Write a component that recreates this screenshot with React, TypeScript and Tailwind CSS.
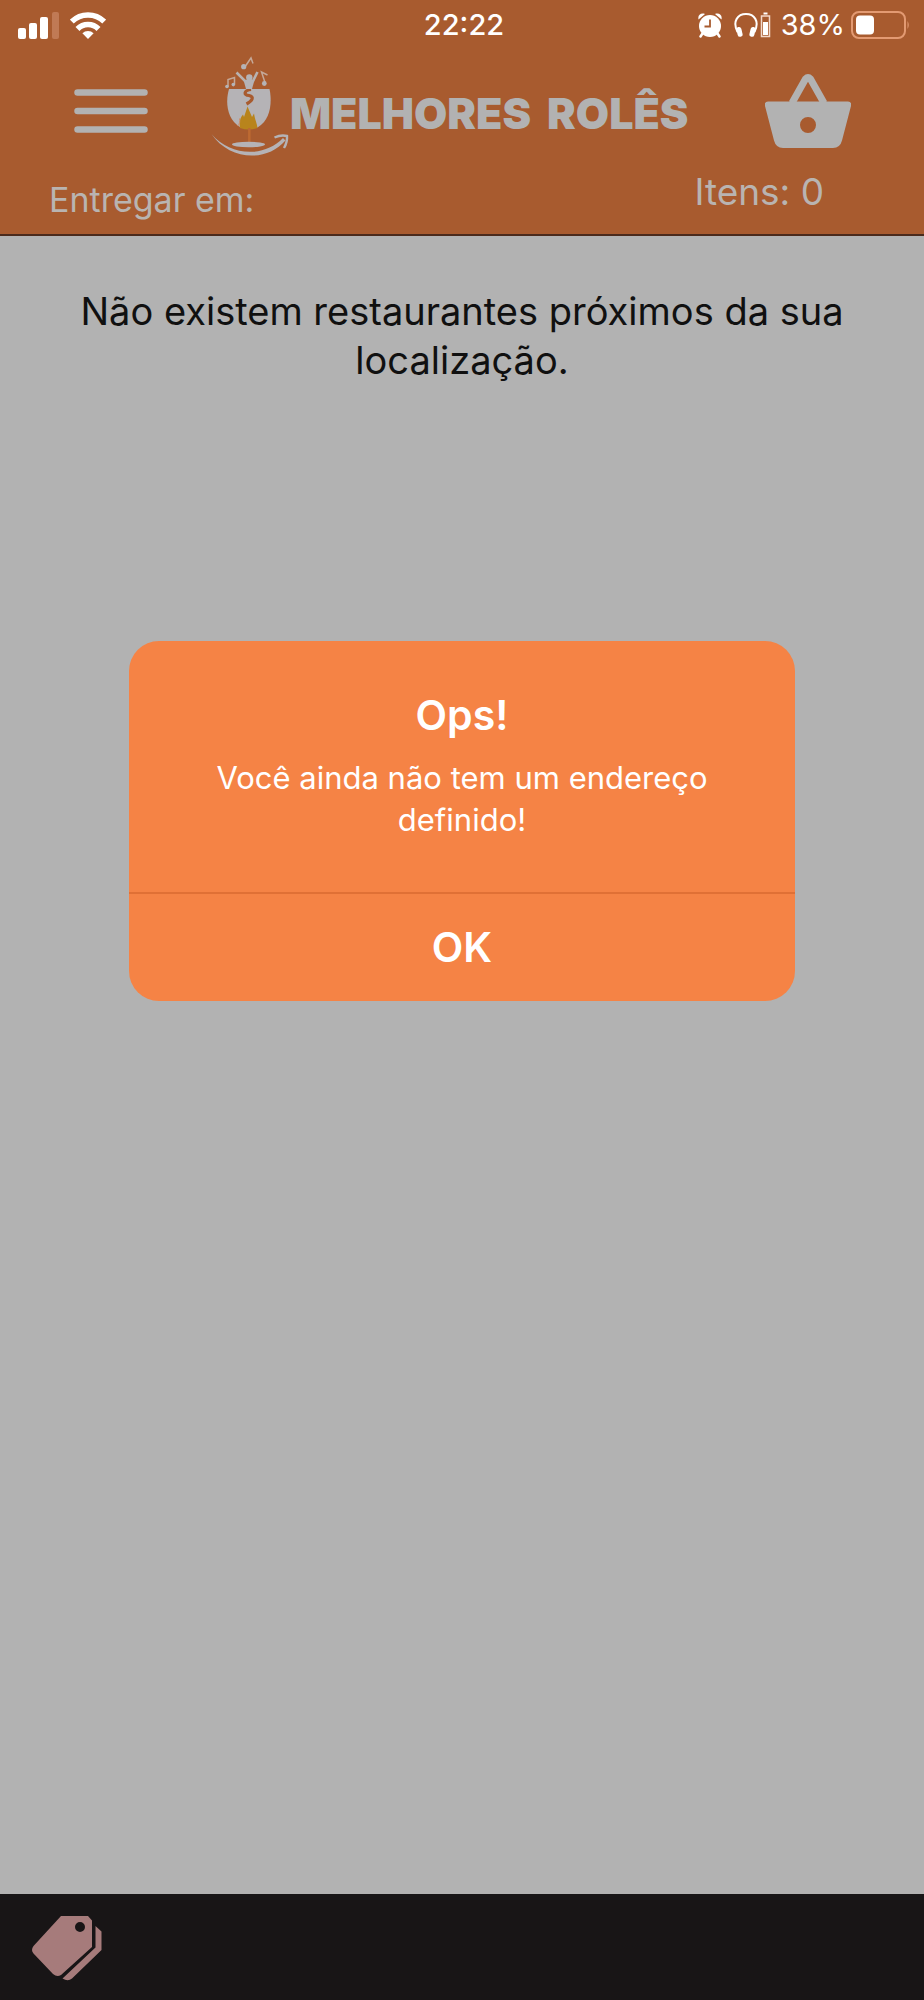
import { useState } from 'react';

function SignalIcon() {
  return (
    <svg viewBox="0 0 42 27" className="w-[42px] h-[27px]" fill="#fff">
      <rect x="0" y="16" width="8" height="11" rx="2" />
      <rect x="11" y="11" width="8" height="16" rx="2" />
      <rect x="22" y="5" width="8" height="22" rx="2" />
      <rect x="34" y="0" width="7" height="27" rx="2" fill="#c07a55" />
    </svg>
  );
}

function WifiIcon() {
  return (
    <svg viewBox="0 0 36 27" className="w-9 h-[27px]" fill="none" stroke="#fff" strokeWidth="5.500">
      <path d="M1.800 9.600 A23 23 0 0 1 34.200 9.600" />
      <path d="M7.500 17 A14.500 14.500 0 0 1 28.500 17" />
      <path d="M12.400 21.200 A8 8 0 0 1 23.600 21.200 L18 27 Z" fill="#fff" stroke="none" />
    </svg>
  );
}

function AlarmIcon() {
  return (
    <svg viewBox="0 0 24 25" className="w-6 h-[25px]" fill="#fff">
      <circle cx="12" cy="13" r="11" />
      <path d="M0.500 6.500 C-0.500 2 3 -0.500 7 1 Z M23.500 6.500 C24.500 2 21 -0.500 17 1 Z" />
      <path d="M4.500 20.500 L2.500 23.500 M19.500 20.500 L21.500 23.500" stroke="#fff" strokeWidth="2.500" strokeLinecap="round" />
      <path d="M12 6.500 V13.500 H6.500" fill="none" stroke="#a85b2f" strokeWidth="1.800" />
    </svg>
  );
}

function HeadphonesIcon() {
  return (
    <svg viewBox="0 0 37 26" className="w-[37px] h-[26px]" fill="none" stroke="#fff">
      <path d="M3.500 20 C-2 9 4 2 12 2 S26 9 20.500 20" strokeWidth="2" />
      <rect x="3" y="15" width="5" height="10" rx="2.500" fill="#fff" stroke="none" transform="rotate(-14 5 20)" />
      <rect x="16" y="15" width="5" height="10" rx="2.500" fill="#fff" stroke="none" transform="rotate(14 19 20)" />
      <path d="M27.500 4 H35.500 V24.500 H27.500 Z" stroke="#f3d9cb" strokeWidth="1.500" />
      <path d="M29.500 1.500 H33.500" strokeWidth="2" />
      <rect x="29" y="10" width="5" height="13" fill="#fff" stroke="none" />
    </svg>
  );
}

function BatteryIcon() {
  return (
    <svg viewBox="0 0 59 28" className="w-[59px] h-7">
      <rect x="1" y="1" width="53" height="26" rx="7" fill="none" stroke="#e39a72" strokeWidth="2" />
      <rect x="5" y="4.500" width="18" height="19" rx="4" fill="#fff" />
      <path d="M56.500 10 Q59 14 56.500 18 Z" fill="#e39a72" />
    </svg>
  );
}

function MenuIcon() {
  return (
    <svg viewBox="0 0 74 44" className="w-[74px] h-11" stroke="#b2b2b2" strokeWidth="6.500" strokeLinecap="round">
      <path d="M3.500 3.500 H70.500 M3.500 22 H70.500 M3.500 40.500 H70.500" />
    </svg>
  );
}

function LogoIcon() {
  return (
    <svg viewBox="210 56 80 110" className="w-20 h-[110px] shrink-0" fill="#b5b3b6">
      {/* Glass */}
      <path d="M229 89 H269.500 C272 101 271.500 119 257.500 127.500 H240.500 C226 119 225.500 101 229 89 Z" />
      <path d="M251 89.500 C244 90.500 243 95 249 95.500 C255 97 252 101 246.500 104" fill="none" stroke="#a85b2f" strokeWidth="3.200" />
      <path d="M240 128 C239 122 240 118 243 114.500 L244 117 L247.500 106.500 L252 117 L254 113.500 C255 120 257 123 257.500 128 Q249 131 240 128 Z" fill="#b8841c" />
      <path d="M237.500 126 C240 124 240 121 239.500 118.500" fill="none" stroke="#cf8b68" />
      <path d="M249.300 128 V143" stroke="#bd6a32" strokeWidth="2.500" />
      <ellipse cx="248.500" cy="144.500" rx="16.500" ry="2.700" />
      {/* Person */}
      <circle cx="249.300" cy="77.500" r="3.200" />
      <path d="M236.500 72.500 L245 81 H253 L257.500 72" fill="none" stroke="#b8b2b0" strokeWidth="2.600" />
      <path d="M243.500 80 H254.500 L252 89 H246 Z" />
      {/* Notes */}
      <g stroke="#c4a898" strokeWidth="1.500" fill="none">
        <path d="M245.500 66 L251 58 L253 63.500" />
        <path d="M228 86.500 V79.500 L234.500 77.500 V84.500" />
        <path d="M265.500 84 L261.500 72 L267.500 75" />
      </g>
      <circle cx="243.700" cy="66.700" r="2.600" />
      <circle cx="227" cy="86.500" r="1.800" />
      <circle cx="233.300" cy="84.600" r="1.800" />
      <circle cx="264.300" cy="83.500" r="2.400" />
      {/* Smile arrow */}
      <path d="M211.500 134 C230 156 264 158 283 138 L285.500 140.500 C266 163 229 160 211.500 134 Z" />
      <path d="M274.500 137.500 Q281 134.500 287 136 Q287.500 142 284 148" fill="none" stroke="#b5b3b6" strokeWidth="2.400" />
    </svg>
  );
}

function BasketIcon() {
  return (
    <svg viewBox="0 0 86 74" className="w-[86px] h-[74px]">
      <path d="M27 29 L40.500 5 Q43 2.500 45.500 5 L59 29" fill="none" stroke="#b2b2b2" strokeWidth="7" strokeLinejoin="round" />
      <path
        fillRule="evenodd"
        fill="#b2b2b2"
        d="M3 27.500 H83 Q87 28 86 32 L77 66.500 Q75 74 68 74 H18 Q11 74 9 66.500 L0 32 Q-1 28 3 27.500 Z M43 43 A8 8 0 1 0 43 59 A8 8 0 1 0 43 43 Z"
      />
    </svg>
  );
}

function TagsIcon() {
  return (
    <svg viewBox="0 0 70 65" className="w-[70px] h-[65px]" fill="#a67b7b">
      <path
        fillRule="evenodd"
        d="M29 0 H56 L60 4.500 V31 L29 59 Q25 61.500 21 58 L1.500 37.500 Q-1.500 34 1.500 30 Z M48 6 A5 5 0 1 0 48 16 A5 5 0 1 0 48 6 Z"
      />
      <path d="M63.500 10 L69.500 15.500 V34 L40 62.500 Q36 66 30.500 62.500 L63.500 31.500 Z" />
    </svg>
  );
}

function StatusBar() {
  return (
    <div className="grid grid-cols-[1fr_auto_1fr] items-center h-[50px] pl-[18px] pr-[14px] text-white text-[29px] leading-8">
      <div className="flex items-center gap-2.5">
        <SignalIcon />
        <WifiIcon />
      </div>
      <span className="font-medium">22:22</span>
      <div className="flex items-center justify-end">
        <AlarmIcon />
        <span className="ml-3 mr-2.5">
          <HeadphonesIcon />
        </span>
        <span className="mr-1.5">38%</span>
        <BatteryIcon />
      </div>
    </div>
  );
}

function Header({ items }: { items: number }) {
  return (
    <header className="bg-[#a85b2f] border-b-2 border-[#4a2a1c]">
      <StatusBar />
      <div className="flex items-center h-[122px] pl-[74px] pr-[73px]">
        <button type="button" aria-label="Menu" className="mr-[62px]">
          <MenuIcon />
        </button>
        <LogoIcon />
        <h1 className="flex gap-4 pt-1 font-black text-[43px] leading-[48px] text-[#b2b2b2]">
          <span>MELHORES</span>
          <span>ROLÊS</span>
        </h1>
        <button type="button" aria-label="Carrinho" className="ml-auto">
          <BasketIcon />
        </button>
      </div>
      <div className="flex justify-between h-[62px] pl-[49px] pr-[100px] text-[#b9b4b1]">
        <p className="text-[34px] leading-10 pt-2">Entregar em:</p>
        <p className="text-[37px] leading-10">Itens: {items}</p>
      </div>
    </header>
  );
}

function AlertDialog({ onClose }: { onClose: () => void }) {
  return (
    <div
      role="alertdialog"
      aria-labelledby="alert-title"
      aria-describedby="alert-message"
      className="absolute top-[641px] left-[14%] w-[72%] rounded-[30px] overflow-hidden bg-[#f58345] text-white text-center"
    >
      <div className="px-16 pt-12 pb-[51px]">
        <h2 id="alert-title" className="text-[41px] leading-[52px] font-semibold">
          Ops!
        </h2>
        <p id="alert-message" className="mt-4 text-[31px] leading-[42px]">
          Você ainda não tem um endereço definido!
        </p>
      </div>
      <button
        type="button"
        onClick={onClose}
        className="w-full h-[109px] border-t-2 border-[#e07035] text-[41px] font-semibold"
      >
        OK
      </button>
    </div>
  );
}

export default function App() {
  const [showAlert, setShowAlert] = useState(true);

  return (
    <div className="relative min-h-screen flex flex-col bg-[#b2b2b2] font-['Inter',sans-serif]">
      <Header items={0} />
      <main className="flex-1 px-16 pt-[51px]">
        <p className="text-center text-[38px] leading-[49px] text-[#101010]">
          Não existem restaurantes próximos da sua localização.
        </p>
      </main>
      <footer className="h-[106px] flex items-center pt-0.5 pl-8 bg-[#181516]">
        <button type="button" aria-label="Promoções">
          <TagsIcon />
        </button>
      </footer>
      {showAlert && <AlertDialog onClose={() => setShowAlert(false)} />}
    </div>
  );
}
